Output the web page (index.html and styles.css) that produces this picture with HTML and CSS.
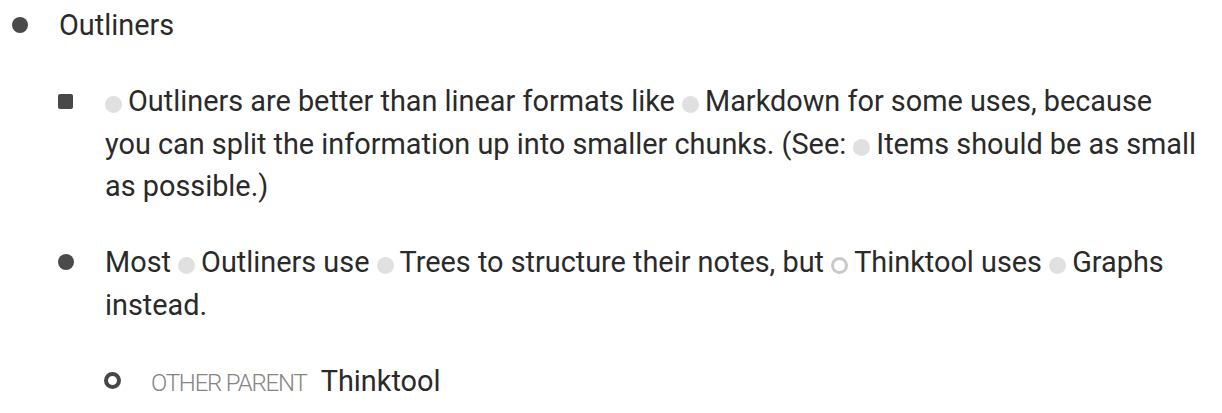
FILE: index.html
```html
<!DOCTYPE html>
<html lang="en">
<head>
<meta charset="utf-8">
<title>Outliners</title>
<link rel="stylesheet" href="styles.css">
</head>
<body>
<div class="outline">
  <div class="item">
    <div class="row">
      <span class="bullet-cell"><span class="bullet dot"></span></span>
      <div class="text">Outliners</div>
    </div>
    <div class="children">
      <div class="item">
        <div class="row">
          <span class="bullet-cell"><span class="bullet square"></span></span>
          <div class="text"><span class="link"></span>Outliners are better than linear formats like <span class="link"></span>Markdown for some uses, because you can split the information up into smaller chunks. (See: <span class="link"></span>Items should be as small as possible.)</div>
        </div>
      </div>
      <div class="item">
        <div class="row">
          <span class="bullet-cell"><span class="bullet dot"></span></span>
          <div class="text">Most <span class="link"></span>Outliners use <span class="link"></span>Trees to structure their notes, but <span class="link ring-link"></span>Thinktool uses <span class="link"></span>Graphs instead.</div>
        </div>
        <div class="children">
          <div class="item">
            <div class="row">
              <span class="bullet-cell"><span class="bullet ring"></span></span>
              <div class="text"><span class="parent-label">OTHER PARENT</span>Thinktool</div>
            </div>
          </div>
        </div>
      </div>
    </div>
  </div>
</div>
</body>
</html>
```

FILE: styles.css
```css
html, body {
  margin: 0;
  padding: 0;
  background: #ffffff;
}

body {
  font-family: Roboto, "Noto Sans", "Liberation Sans", sans-serif;
  font-size: 28.85px;
  line-height: 42.5px;
  color: #2a2a2a;
}

.outline {
  padding: 4px 24px 0 12px;
}

.row {
  display: flex;
  align-items: flex-start;
}

.bullet-cell {
  flex: 0 0 47px;
  height: 42.5px;
  display: flex;
  align-items: center;
}

.bullet {
  display: block;
  box-sizing: border-box;
}

.bullet.dot {
  width: 16px;
  height: 16px;
  border-radius: 50%;
  background: #4a4a4a;
}

.bullet.square {
  width: 15px;
  height: 15px;
  border-radius: 2px;
  background: #484848;
}

.bullet.ring {
  width: 17px;
  height: 17px;
  border-radius: 50%;
  border: 4px solid #474747;
}

.text {
  flex: 1 1 auto;
  min-width: 0;
}

.children {
  margin-left: 46px;
}

.children > .item {
  margin-top: 33.5px;
}

.link {
  display: inline-block;
  box-sizing: border-box;
  width: 17px;
  height: 17px;
  border-radius: 50%;
  background: #e0e0e0;
  margin-right: 6px;
  vertical-align: -2px;
}

.link.ring-link {
  background: transparent;
  border: 3px solid #c9c9c9;
}

.parent-label {
  font-size: 24px;
  font-weight: 300;
  letter-spacing: -1.2px;
  color: #858585;
  margin-right: 14px;
}
```
